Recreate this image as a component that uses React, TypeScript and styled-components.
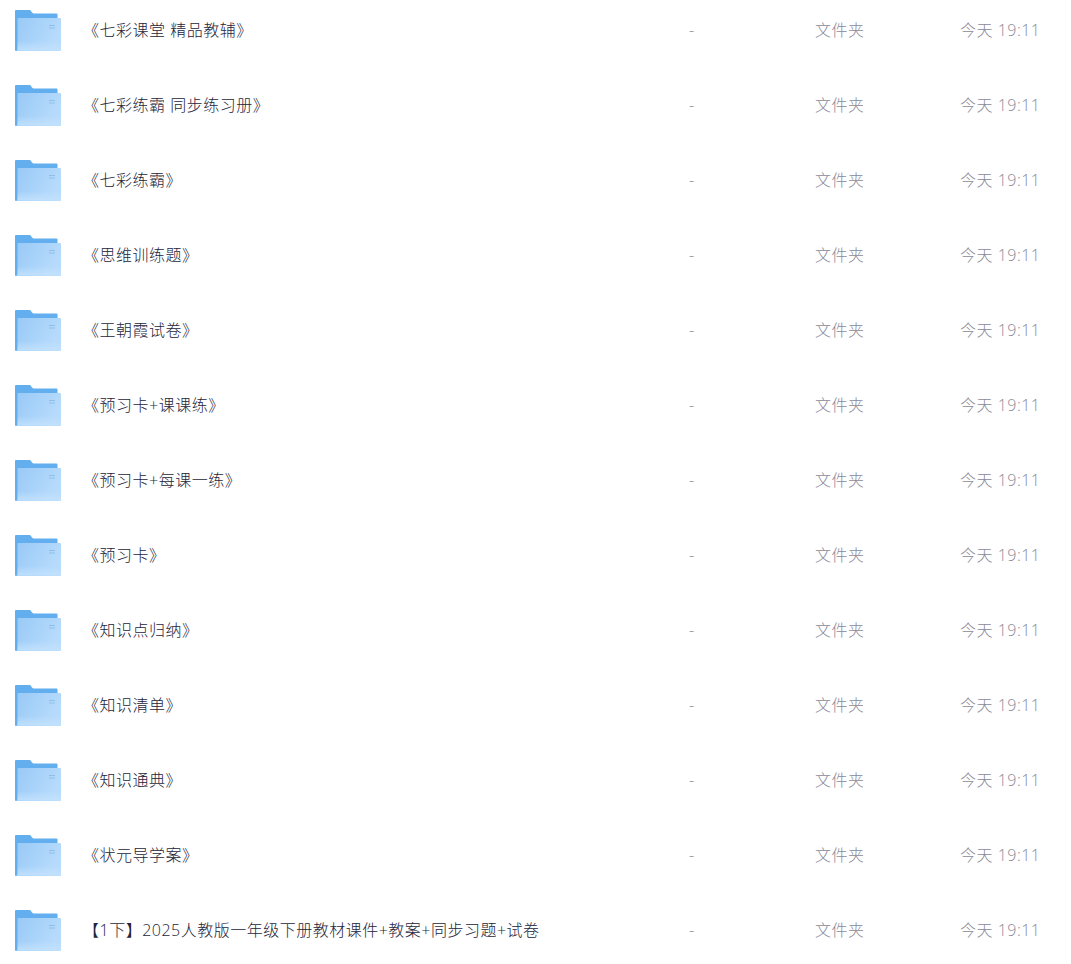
import React from "react";
import { createGlobalStyle, styled } from "styled-components";

const GlobalStyle = createGlobalStyle`
  html, body {
    margin: 0;
    padding: 0;
    background: #fff;
    overflow: hidden;
  }
  body {
    font-family: "Open Sans", "Noto Sans CJK SC", "Liberation Sans", sans-serif;
  }
`;

const List = styled.div`
  margin-top: -8px;
  width: 1071px;
`;

const Row = styled.div`
  display: grid;
  grid-template-columns: 83px 606px 126px 145px 1fr;
  align-items: center;
  height: 75px;
`;

const IconCell = styled.div`
  display: flex;
  padding: 2px 0 0 15px;
`;

const Name = styled.div`
  font-size: 16px;
  font-weight: 300;
  letter-spacing: 0.5px;
  line-height: 24px;
  color: #24253a;
  white-space: nowrap;
`;

const Meta = styled.div`
  font-size: 16px;
  font-weight: 300;
  letter-spacing: 0.5px;
  line-height: 24px;
  color: #8a8a9a;
  white-space: nowrap;
`;

const FolderIcon = () => (
  <svg width="46" height="41" viewBox="0 0 46 41">
    <defs>
      <linearGradient id="front" x1="0" y1="0" x2="1" y2="0.4">
        <stop offset="0" stopColor="#98c9f6" />
        <stop offset="1" stopColor="#b7dbfc" />
      </linearGradient>
      <linearGradient id="shine" x1="0" y1="0" x2="0" y2="1">
        <stop offset="0" stopColor="#c4e2fd" stopOpacity="0" />
        <stop offset="1" stopColor="#c4e2fd" stopOpacity="0.85" />
      </linearGradient>
    </defs>
    <path
      d="M0 1 Q0 0 1 0 H14.5 Q15.5 0 16 1 L17 2.6 Q17.5 3.4 18.5 3.4 H41.5 Q42.5 3.4 42.5 4.4 V12 H0 Z"
      fill="#62aeee"
    />
    <path d="M0 8 H3 V41 H1 Q0 41 0 40 Z" fill="#62aeee" />
    <path
      d="M2.5 9 Q2.5 8 3.5 8 H45 Q46 8 46 9 V40 Q46 41 45 41 H1 Q1 41 1.5 40.5 Q2.5 40 2.5 39 Z"
      fill="url(#front)"
    />
    <rect x="2.5" y="31" width="43.5" height="9.5" fill="url(#shine)" />
    <rect x="34" y="15" width="6" height="1" fill="#8fbfe9" />
    <rect x="34" y="17.5" width="6" height="1" fill="#8fbfe9" />
  </svg>
);

const names = [
  "《七彩课堂 精品教辅》",
  "《七彩练霸 同步练习册》",
  "《七彩练霸》",
  "《思维训练题》",
  "《王朝霞试卷》",
  "《预习卡+课课练》",
  "《预习卡+每课一练》",
  "《预习卡》",
  "《知识点归纳》",
  "《知识清单》",
  "《知识通典》",
  "《状元导学案》",
  "【1下】2025人教版一年级下册教材课件+教案+同步习题+试卷",
];

export default function App() {
  return (
    <>
      <GlobalStyle />
      <List>
        {names.map((name) => (
          <Row key={name}>
            <IconCell>
              <FolderIcon />
            </IconCell>
            <Name>{name}</Name>
            <Meta>-</Meta>
            <Meta>文件夹</Meta>
            <Meta>今天 19:11</Meta>
          </Row>
        ))}
      </List>
    </>
  );
}
